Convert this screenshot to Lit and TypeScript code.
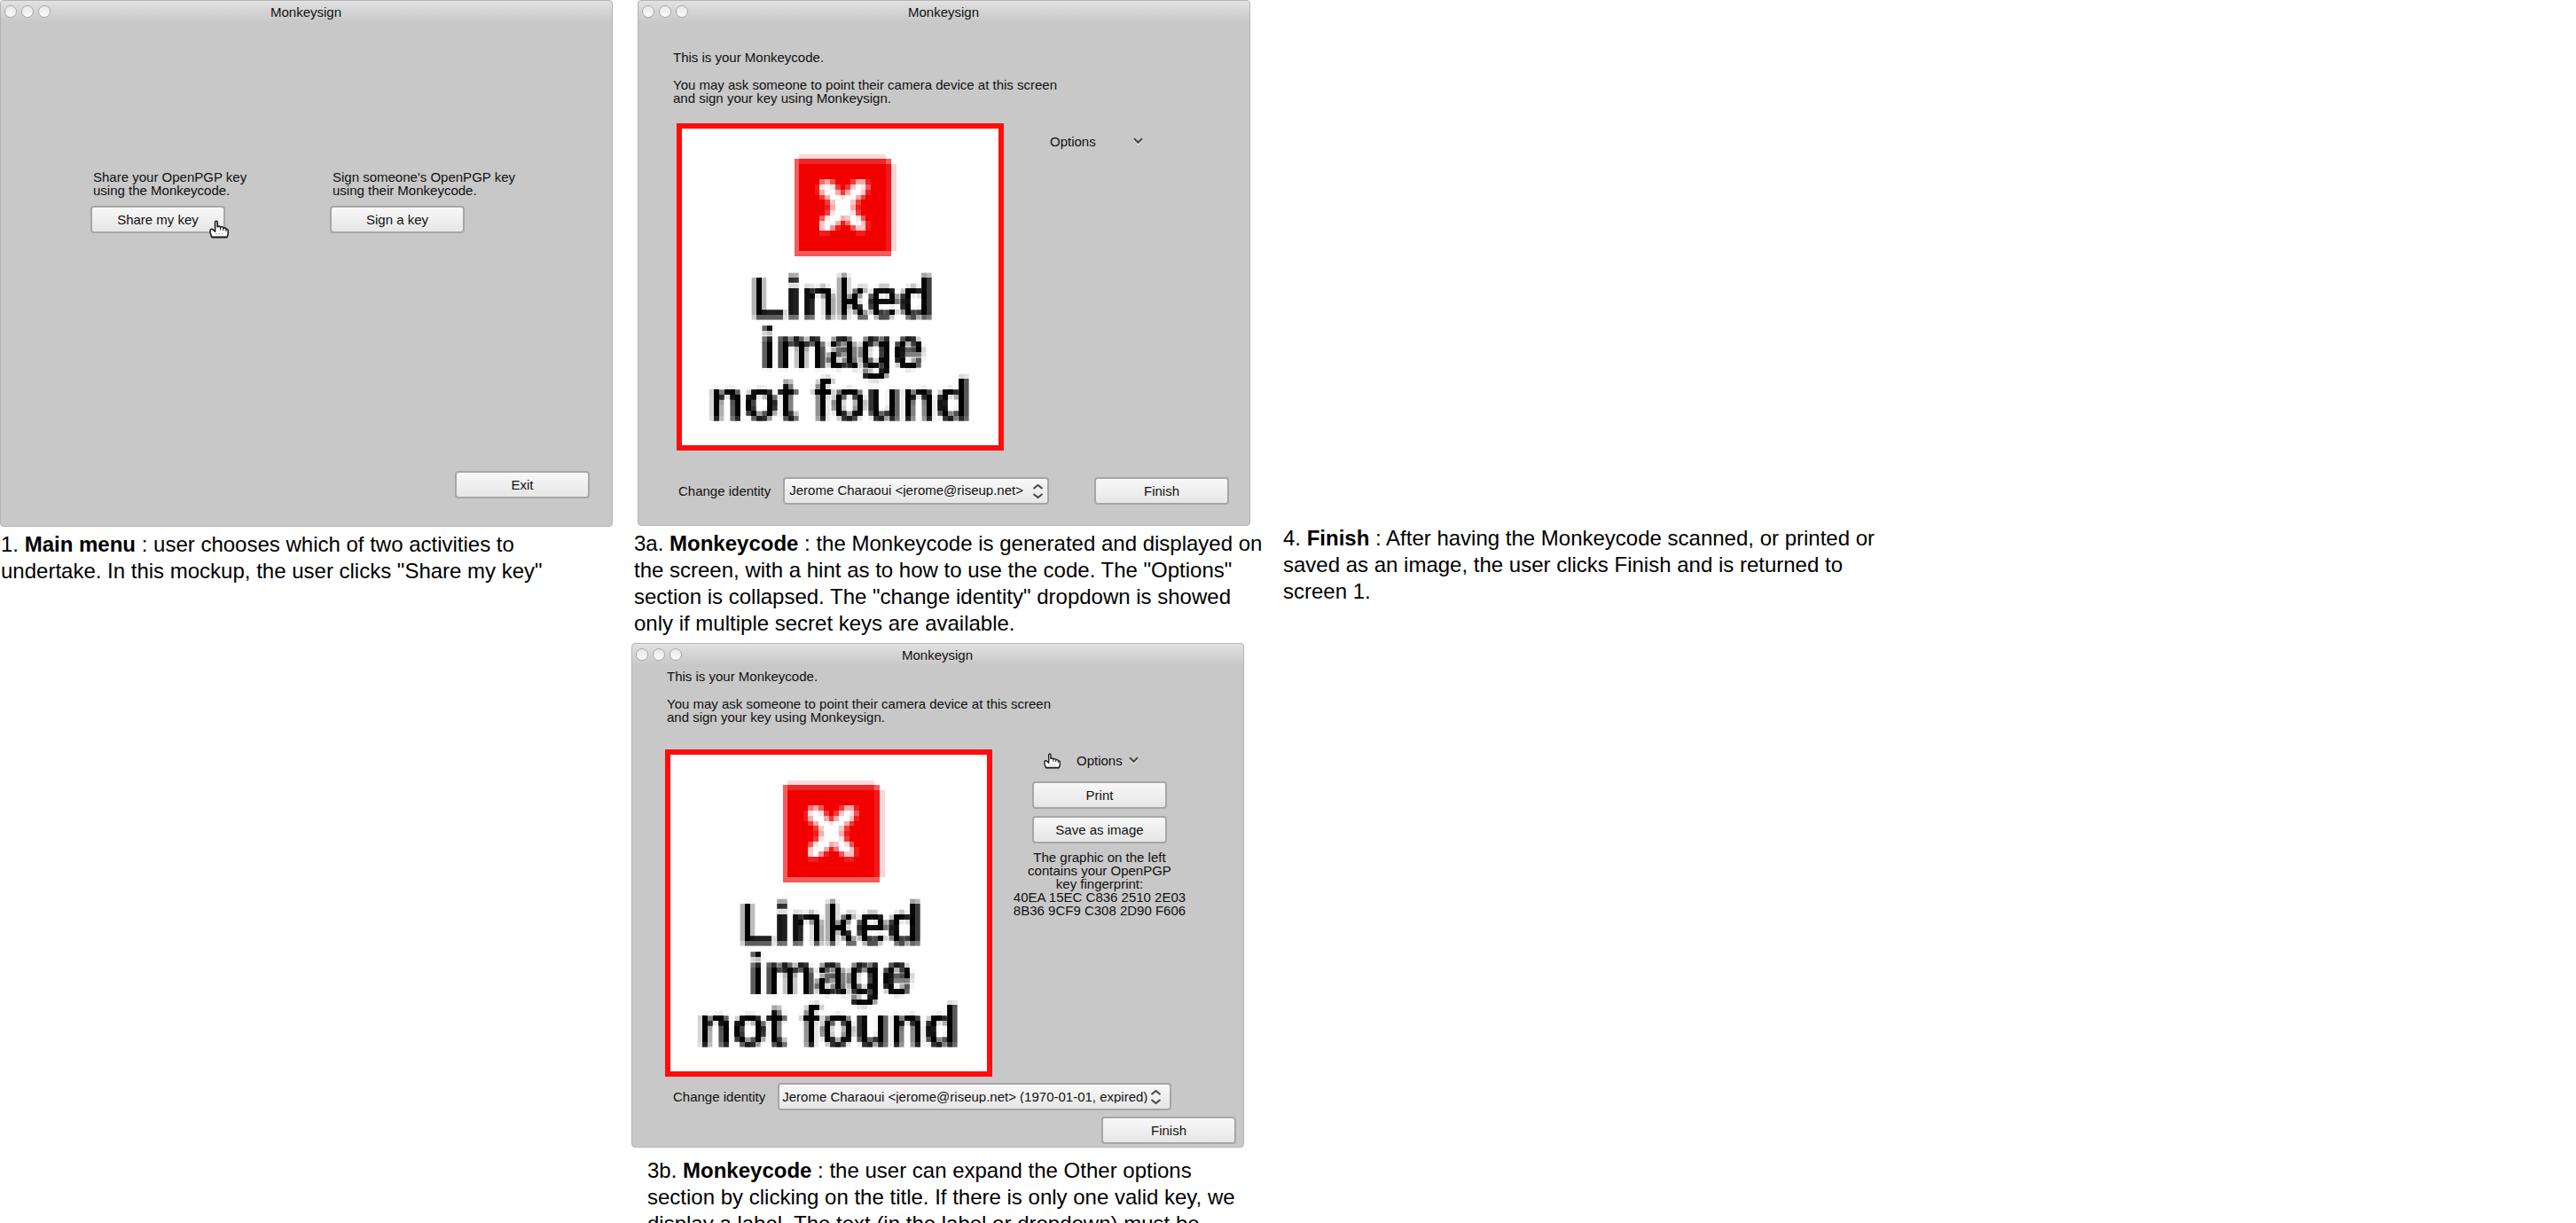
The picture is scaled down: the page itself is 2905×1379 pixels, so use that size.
import { LitElement, html, svg, css } from "lit";
import { customElement, property } from "lit/decorators.js";

const controls = css`
  :host {
    display: block;
    font-family: "Liberation Sans", Arial, sans-serif;
    font-size: 15px;
    line-height: 15px;
    color: #111;
  }
  * {
    box-sizing: border-box;
  }
  p {
    margin: 0;
  }
  .button,
  .select {
    font: inherit;
    color: inherit;
    height: 31px;
    margin: 0;
    border: 2px solid #a6a6a6;
    border-radius: 4px;
    background: linear-gradient(#f8f8f8, #e6e6e6);
  }
  .button {
    display: block;
    width: 152px;
    padding: 0 0 1px;
    text-align: center;
  }
`;

/** Pointing hand drawn over the place the user clicks. */
const hand = (size: number) => html`
  <svg width=${size} height=${size} viewBox="0 0 20 20" aria-hidden="true">
    <path
      d="M6 2.2C6 .6 8.400.6 8.400 2.200V7c.6-1 2.600-.8 3 .5.8-1 2.800-.6 3 .8.9-.8 2.700-.2 2.900 1.200.8-.4 2 .1 2 1.500v3.500L18.300 17.500H2.500L1 13V10.500c0-1.500 2-1.800 3-.4L6 11.800Z"
      transform="translate(0 1)"
      fill="#fff"
      stroke="#222"
      stroke-width="1.5"
      stroke-linejoin="round"
    />
    <path d="M11.400 8.500v3M14.400 9.300v2.500M17.200 10.500v2" stroke="#222" stroke-width="1" />
    <path d="M6.500 15h1.500M9.500 15h1.500M12.500 15h1.500" stroke="#999" stroke-width="1" />
    <path d="M2.500 18.700H18" stroke="#222" stroke-width="1.5" />
  </svg>
`;

/** Strength of the white cross over the red tile, one digit per cell. */
const CROSS = [
  "04630002661",
  "18982027983",
  "16996269971",
  "02699899620",
  "00279997200",
  "00169996100",
  "00289998200",
  "03899679830",
  "07996149971",
  "07951003771",
  "01100000110",
];

@customElement("missing-picture")
export class MissingPicture extends LitElement {
  static styles = css`
    :host {
      display: block;
      width: 369px;
    }
    .picture {
      display: block;
      width: 100%;
      font-family: "Liberation Sans", Arial, sans-serif;
    }
    .words {
      font-size: 64px;
      font-weight: bold;
      text-anchor: middle;
    }
  `;

  render() {
    return html`
      <svg class="picture" viewBox="0 0 369 369" role="img" aria-label="Linked image not found">
        <defs>
          <filter id="cells" filterUnits="userSpaceOnUse" x="0" y="0" width="369" height="369" color-interpolation-filters="sRGB">
            <feGaussianBlur in="SourceGraphic" stdDeviation="1.5" result="soft" />
            <feFlood x="2" y="2" width="2" height="2" flood-color="#000" result="dot" />
            <feOffset in="dot" dx="0" dy="0" x="0" y="0" width="6" height="6" result="cell" />
            <feTile in="cell" result="grid" />
            <feComposite in="soft" in2="grid" operator="in" />
            <feMorphology operator="dilate" radius="2" />
          </filter>
        </defs>
        <g transform="scale(5.766)" shape-rendering="crispEdges">
          <rect width="64" height="64" fill="#ff0d0d" />
          <rect x="1" y="1" width="62" height="62" fill="#fff" />
          <rect x="24" y="6" width="17" height="1" fill="#fcdada" />
          <rect x="42" y="8" width="1" height="17" fill="#fcd4d4" />
          <rect x="23" y="7" width="19" height="19" fill="#f45c5c" />
          <rect x="24" y="7" width="17" height="1" fill="#f12626" />
          <rect x="41" y="8" width="1" height="17" fill="#f01818" />
          <rect x="24" y="8" width="17" height="17" fill="#f20000" />
          ${CROSS.map((row, y) =>
            [...row].map((cell, x) =>
              cell === "0"
                ? null
                : svg`<rect x=${27 + x} y=${11 + y} width="1" height="1" fill="#fff" fill-opacity=${Number(cell) / 9} />`
            )
          )}
        </g>
        <g class="words" filter="url(#cells)">
          <text x="187" y="219">Linked</text>
          <text x="187" y="276">image</text>
          <text x="184" y="334">not found</text>
        </g>
      </svg>
    `;
  }
}

@customElement("mock-window")
export class MockWindow extends LitElement {
  @property() heading = "Monkeysign";

  static styles = [
    controls,
    css`
      .frame {
        border: 1px solid #b4b4b4;
        border-radius: 4px;
        background: linear-gradient(#e2e2e2, #d6d6d6 10px, #c8c8c8 24px);
      }
      .bar {
        display: grid;
        grid-template-columns: 1fr auto 1fr;
        height: 29px;
        padding: 5px 5px 0 4px;
      }
      .lights {
        display: flex;
        gap: 5px;
      }
      .light {
        width: 14px;
        height: 14px;
        border: 1px solid #a8a8a8;
        border-radius: 50%;
        background: linear-gradient(#e8e8e8, #fafafa);
      }
      .heading {
        margin: 0;
        font: inherit;
      }
    `,
  ];

  render() {
    return html`
      <section class="frame">
        <header class="bar">
          <div class="lights">
            <span class="light"></span><span class="light"></span><span class="light"></span>
          </div>
          <h2 class="heading">${this.heading}</h2>
        </header>
        <slot></slot>
      </section>
    `;
  }
}

@customElement("main-menu")
export class MainMenu extends LitElement {
  static styles = [
    controls,
    css`
      .choices {
        display: flex;
        gap: 118px;
        padding: 162px 0 0 101px;
      }
      .choice {
        width: 152px;
        position: relative;
      }
      .hint {
        padding-left: 3px;
        margin-bottom: 10px;
        white-space: nowrap;
      }
      .pointer {
        position: absolute;
        left: 134px;
        top: 55px;
        line-height: 0;
      }
      .footer {
        display: flex;
        justify-content: flex-end;
        padding: 268px 25px 31px;
      }
    `,
  ];

  render() {
    return html`
      <mock-window>
        <div class="choices">
          <div class="choice">
            <p class="hint" id="share">Share your OpenPGP key<br />using the Monkeycode.</p>
            <button class="button" aria-describedby="share">Share my key</button>
            <span class="pointer">${hand(22)}</span>
          </div>
          <div class="choice">
            <p class="hint" id="sign">Sign someone's OpenPGP key<br />using their Monkeycode.</p>
            <button class="button" aria-describedby="sign">Sign a key</button>
          </div>
        </div>
        <div class="footer"><button class="button">Exit</button></div>
      </mock-window>
    `;
  }
}

@customElement("code-screen")
export class CodeScreen extends LitElement {
  @property({ type: Boolean, reflect: true }) expanded = false;
  @property() identity = "";

  static styles = [
    controls,
    css`
      .intro {
        display: grid;
        gap: 16px;
        padding: 27px 0 0 39px;
      }
      .main {
        display: flex;
        padding: 21px 0 0 43px;
      }
      .panel {
        display: flex;
        flex-direction: column;
        align-items: center;
        width: 242px;
      }
      .header {
        display: contents;
      }
      .toggle {
        display: flex;
        align-items: center;
        align-self: flex-start;
        gap: 42px;
        margin: 11px 0 0 50px;
        padding: 2px;
        border: 0;
        background: none;
        font: inherit;
        color: inherit;
      }
      .chevron,
      .arrows {
        fill: none;
        stroke: #444;
        stroke-width: 2;
      }
      .light {
        stroke: #eee;
      }
      .extra {
        display: grid;
        justify-items: center;
        gap: 8px;
        padding-top: 14px;
        text-align: center;
      }
      .footer {
        display: flex;
        align-items: center;
        padding: 30px 23px 23px 45px;
      }
      .picker {
        display: grid;
        align-items: center;
        width: 300px;
        margin-left: 14px;
      }
      .select {
        grid-area: 1 / 1;
        width: 100%;
        padding: 0 24px 2px 5px;
        appearance: none;
      }
      .arrows {
        grid-area: 1 / 1;
        justify-self: end;
        margin-right: 6px;
        pointer-events: none;
      }
      .finish {
        margin-left: auto;
      }

      :host([expanded]) .intro {
        padding-top: 0;
      }
      :host([expanded]) .main {
        padding: 29px 0 0 37px;
      }
      :host([expanded]) .header {
        display: flex;
        align-self: flex-start;
        gap: 16px;
        padding: 3px 0 0 58px;
      }
      :host([expanded]) .toggle {
        gap: 7px;
        margin: 0;
      }
      :host([expanded]) .footer {
        flex-wrap: wrap;
        row-gap: 7px;
        padding: 7px 8px 3px 46px;
      }
      :host([expanded]) .picker {
        width: 444px;
      }
      :host([expanded]) .select {
        padding: 0 16px 0 3px;
      }
      :host([expanded]) .arrows {
        margin-right: 11px;
      }
    `,
  ];

  private toggle() {
    this.expanded = !this.expanded;
  }

  render() {
    return html`
      <mock-window>
        <div class="intro">
          <p>This is your Monkeycode.</p>
          <p>
            You may ask someone to point their camera device at this screen<br />and sign your key using Monkeysign.
          </p>
        </div>
        <div class="main">
          <missing-picture></missing-picture>
          <div class="panel">
            <div class="header">
              ${this.expanded ? hand(19) : null}
              <button class="toggle" aria-expanded=${this.expanded ? "true" : "false"} @click=${this.toggle}>
                Options
                <svg class="chevron" width="11" height="9" viewBox="0 0 11 9" aria-hidden="true">
                  <path class="light" d="M1 2.500 5.500 7.200 10 2.500" />
                  <path d="M1 1.200 5.500 5.800 10 1.200" />
                </svg>
              </button>
            </div>
            ${this.expanded
              ? html`<div class="extra">
                  <button class="button">Print</button>
                  <button class="button">Save as image</button>
                  <p>
                    The graphic on the left<br />contains your OpenPGP<br />key fingerprint:<br />40EA 15EC C836 2510
                    2E03<br />8B36 9CF9 C308 2D90 F606
                  </p>
                </div>`
              : null}
          </div>
        </div>
        <div class="footer">
          <label for="identity">Change identity</label>
          <div class="picker">
            <select class="select" id="identity">
              <option>${this.identity}</option>
            </select>
            <svg class="arrows" width="13" height="18" viewBox="0 0 13 18" aria-hidden="true">
              <path d="M1.500 6 6.500 2 11.500 6M1.500 12 6.500 16 11.500 12" />
            </svg>
          </div>
          <button class="button finish">Finish</button>
        </div>
      </mock-window>
    `;
  }
}

@customElement("app-root")
export class AppRoot extends LitElement {
  static styles = css`
    :host {
      display: block;
      height: 100vh;
      overflow: hidden;
      background: #fff;
      color: #000;
      font-family: "Liberation Sans", Arial, sans-serif;
      font-size: 24px;
      line-height: 30px;
    }
    .board {
      display: grid;
      grid-template-columns: 712fr 735fr 1458fr;
    }
    .menu {
      padding-right: 21px;
    }
    .first {
      padding: 0 37px 0 7px;
    }
    .second {
      padding: 7px 44px 0 0;
    }
    .end {
      padding-top: 592px;
    }
    .caption {
      margin: 0;
      padding: 5px 0 0 1px;
      white-space: nowrap;
    }
    .code .caption {
      padding-left: 3px;
    }
    .code .shifted {
      padding: 11px 0 0 18px;
    }
    .end .caption {
      padding: 0;
    }
  `;

  render() {
    return html`
      <main class="board">
        <section>
          <div class="menu"><main-menu></main-menu></div>
          <p class="caption">
            1. <b>Main menu</b> : user chooses which of two activities to<br />undertake. In this mockup, the user
            clicks "Share my key"
          </p>
        </section>
        <section class="code">
          <div class="first">
            <code-screen identity="Jerome Charaoui <jerome@riseup.net>"></code-screen>
          </div>
          <p class="caption">
            3a. <b>Monkeycode</b> : the Monkeycode is generated and displayed on<br />the screen, with a hint as to how
            to use the code. The "Options"<br />section is collapsed. The "change identity" dropdown is showed<br />only
            if multiple secret keys are available.
          </p>
          <div class="second">
            <code-screen expanded identity="Jerome Charaoui <jerome@riseup.net> (1970-01-01, expired)"></code-screen>
          </div>
          <p class="caption shifted">
            3b. <b>Monkeycode</b> : the user can expand the Other options<br />section by clicking on the title. If
            there is only one valid key, we<br />display a label. The text (in the label or dropdown) must be
          </p>
        </section>
        <section class="end">
          <p class="caption">
            4. <b>Finish</b> : After having the Monkeycode scanned, or printed or<br />saved as an image, the user
            clicks Finish and is returned to<br />screen 1.
          </p>
        </section>
      </main>
    `;
  }
}
